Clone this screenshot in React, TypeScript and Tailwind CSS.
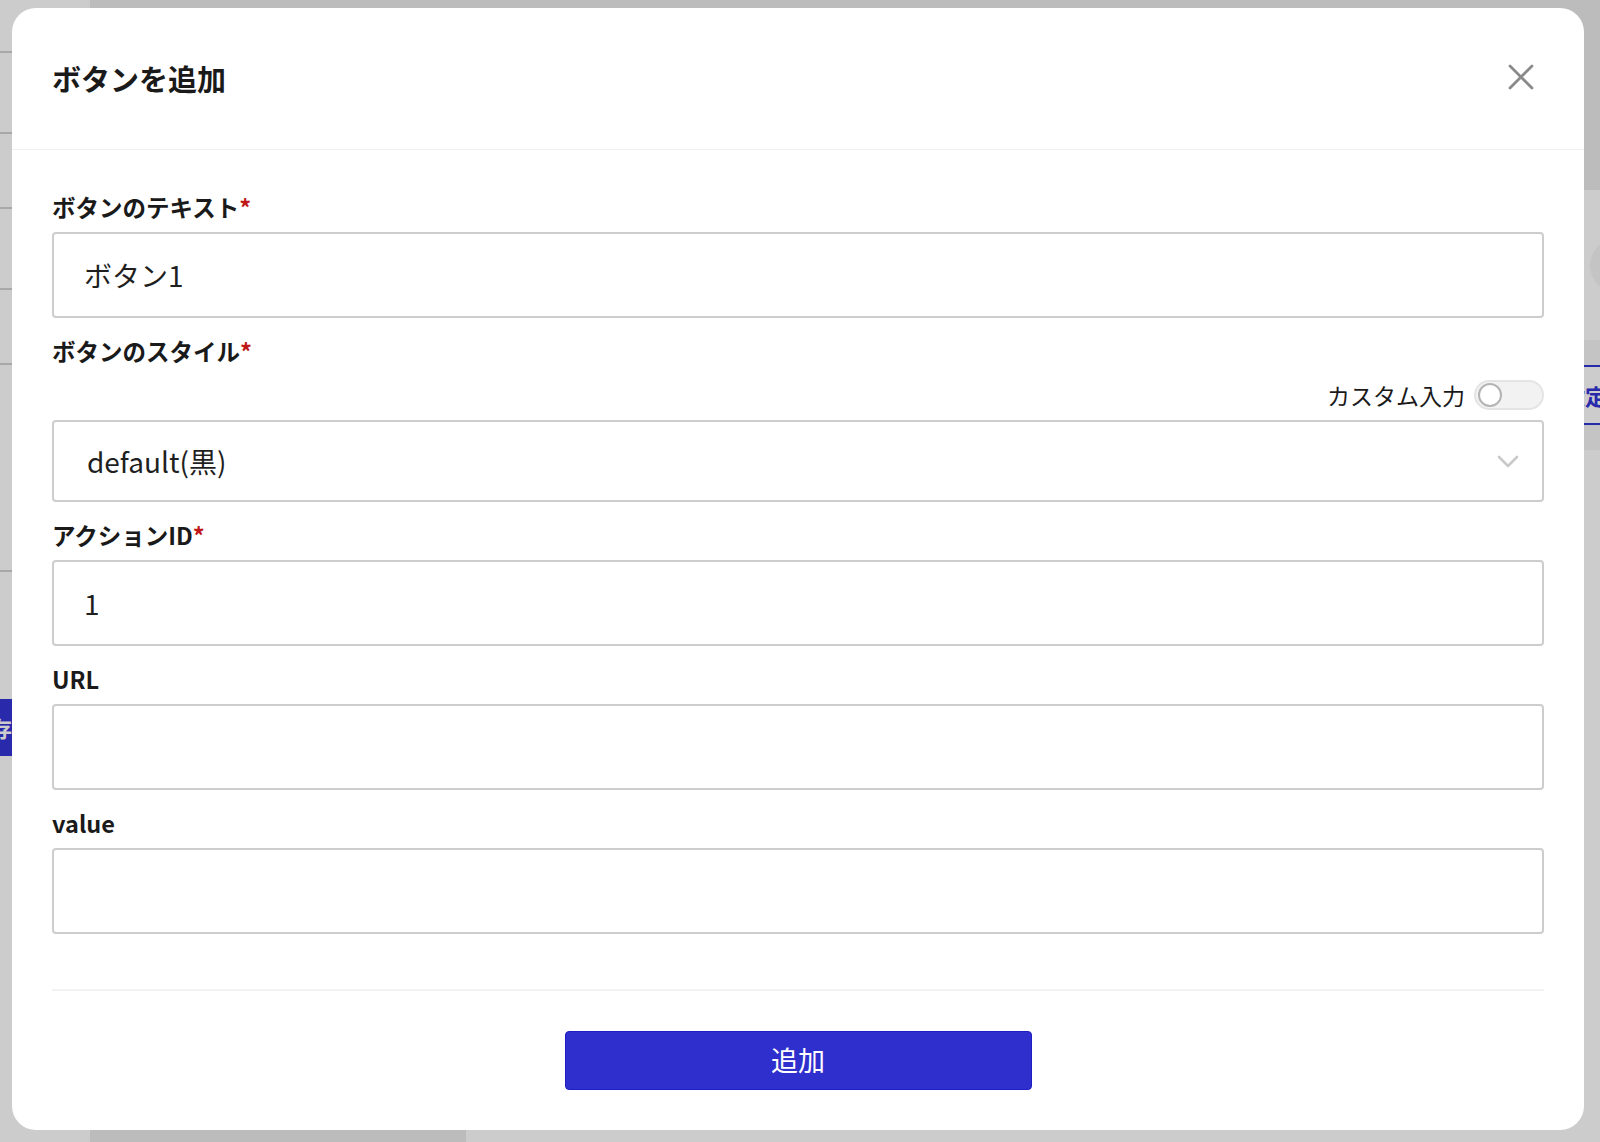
import { useState } from "react";

type Field = {
  label: string;
  required?: boolean;
  value: string;
};

const FIELDS_AFTER_STYLE: Field[] = [
  { label: "アクションID", required: true, value: "1" },
  { label: "URL", value: "" },
  { label: "value", value: "" },
];

function Label({ text, required }: { text: string; required?: boolean }) {
  return (
    <div className="flex h-[34px] items-center text-[23.5px] font-bold leading-none text-[#1a1a1a]">
      {text}
      {required && <span className="text-[#c01818]">*</span>}
    </div>
  );
}

function TextInput({ value }: { value: string }) {
  return (
    <input
      type="text"
      defaultValue={value}
      className="mt-[7px] h-[86px] w-full rounded-[4px] border-2 border-[#cdcdcd] bg-white pl-[30px] text-[28px] text-[#1f1f1f] focus:outline-none"
    />
  );
}

function CloseIcon() {
  return (
    <svg width="26" height="26" viewBox="0 0 26 26" className="-mt-[4px]">
      <path
        d="M2 2 L24 24 M24 2 L2 24"
        stroke="#8a8a8a"
        strokeWidth="2.8"
        strokeLinecap="round"
        fill="none"
      />
    </svg>
  );
}

function Chevron() {
  return (
    <svg width="22" height="13" viewBox="0 0 22 13">
      <path
        d="M2 2 L11 11 L20 2"
        stroke="#c9c9c9"
        strokeWidth="2.6"
        strokeLinecap="round"
        strokeLinejoin="round"
        fill="none"
      />
    </svg>
  );
}

function BackgroundPage() {
  return (
    <div className="flex h-full">
      {/* sidebar behind the dialog */}
      <aside className="flex w-[90px] flex-col bg-white">
        <div className="h-[53px] border-b-2 border-[#d2d2d2]" />
        <div className="h-[81px] border-b-2 border-[#d2d2d2]" />
        <div className="h-[75px] border-b-2 border-[#d2d2d2]" />
        <div className="h-[81px] border-b-2 border-[#d2d2d2]" />
        <div className="h-[75px] border-b-2 border-[#d2d2d2]" />
        <div className="h-[207px] border-b-2 border-[#d2d2d2]" />
        <div className="mt-[127px] flex h-[57px] items-center justify-end overflow-hidden bg-[#3434d8] pr-[78px] text-[22px] font-bold text-white whitespace-nowrap">
          保存
        </div>
      </aside>

      <main className="flex flex-1 flex-col">
        <header className="h-[190px] bg-[#ececec]" />
        <div className="flex flex-1 flex-col bg-white">
          <div className="flex h-[150px] items-center justify-end">
            <div className="-mr-[45px] h-[55px] w-[55px] rounded-full bg-[#f6f6f6]" />
          </div>
          <div className="h-[25px] bg-[#f5f5f5]" />
          <div className="flex h-[60px] justify-end">
            <div className="flex w-[37px] items-center border-y-2 border-[#3434d8] text-[22px] font-bold whitespace-nowrap text-[#3434d8]">
              設定
            </div>
          </div>
          <div className="h-[25px] bg-[#f5f5f5]" />
        </div>
        <footer className="flex h-[60px]">
          <div className="w-[376px] bg-[#ececec]" />
          <div className="flex-1 bg-white" />
        </footer>
      </main>
    </div>
  );
}

export default function App() {
  const [custom, setCustom] = useState(false);

  return (
    <div className="relative h-[1142px] w-[1600px] overflow-hidden font-['Noto_Sans_CJK_JP',sans-serif]">
      <BackgroundPage />

      {/* dialog overlay */}
      <div className="absolute inset-0 bg-black/20 pt-[8px] pr-[16px] pb-[12px] pl-[12px]">
        <div className="flex h-full flex-col rounded-[24px] bg-white">
          <div className="flex h-[142px] items-center justify-between border-b border-[#f0f0f0] pr-[50px] pl-[40px]">
            <h2 className="text-[29px] font-bold text-[#1a1a1a]">ボタンを追加</h2>
            <button aria-label="close">
              <CloseIcon />
            </button>
          </div>

          <div className="flex flex-col px-[40px] pt-[41px]">
            <Label text="ボタンのテキスト" required />
            <TextInput value="ボタン1" />

            <div className="mt-[17px]">
              <Label text="ボタンのスタイル" required />
            </div>
            <div className="mt-[11px] flex h-[30px] items-center justify-end gap-[9px]">
              <span className="text-[23px] text-[#1a1a1a]">カスタム入力</span>
              <button
                onClick={() => setCustom(!custom)}
                className={`flex h-[30px] w-[70px] items-center rounded-full border-2 px-[2px] ${
                  custom ? "justify-end border-[#2f2fcd] bg-[#2f2fcd]" : "border-[#e4e4e4] bg-[#f2f2f2]"
                }`}
              >
                <span className="h-[24px] w-[24px] rounded-full border-2 border-[#b4b4b4] bg-white" />
              </button>
            </div>
            <div className="mt-[10px] flex h-[82px] w-full items-center justify-between rounded-[4px] border-2 border-[#cdcdcd] pr-[23px] pl-[33px]">
              <span className="text-[28px] text-[#1f1f1f]">default(黒)</span>
              <Chevron />
            </div>

            {FIELDS_AFTER_STYLE.map((f) => (
              <div key={f.label} className="mt-[17px]">
                <Label text={f.label} required={f.required} />
                <TextInput value={f.value} />
              </div>
            ))}

            <div className="mt-[55px] border-t-2 border-[#f2f2f2]" />

            <div className="mt-[40px] flex justify-center">
              <button className="h-[59px] w-[467px] rounded-[4px] border border-[#1e1ec4] bg-[#2f2fcd] text-[27px] text-white">
                追加
              </button>
            </div>
          </div>
        </div>
      </div>
    </div>
  );
}
